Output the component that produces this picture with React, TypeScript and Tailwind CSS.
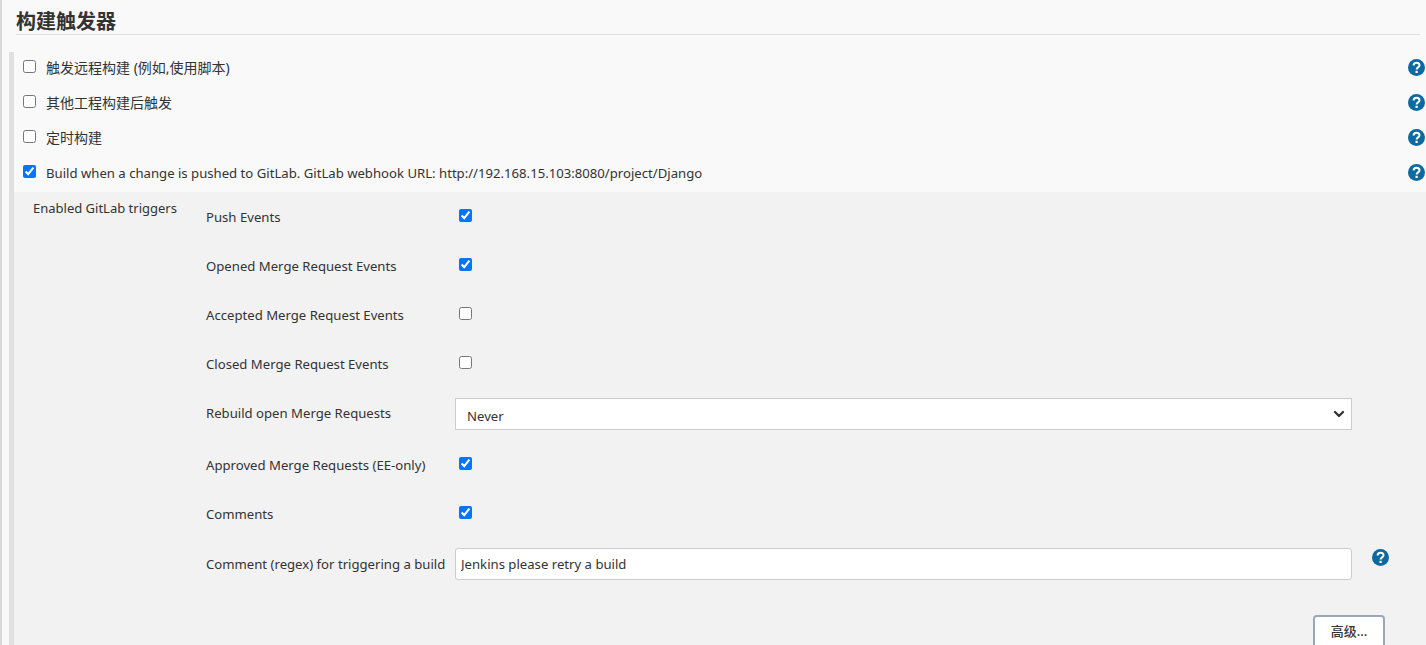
import { ChevronDown } from "lucide-react";

const font = { fontFamily: '"Noto Sans", "Noto Sans CJK SC", sans-serif' };

function HelpIcon() {
  return (
    <svg viewBox="0 0 17 17" className="h-[17px] w-[17px] shrink-0">
      <circle cx="8.5" cy="8.5" r="8.5" fill="#0b6aa2" />
      <path
        d="M5.6 6.6c0-1.8 1.3-2.9 3-2.9s2.9 1.1 2.9 2.5c0 2.1-2.9 2.3-2.9 4.3"
        fill="none"
        stroke="#fff"
        strokeWidth="2"
      />
      <rect x="7.5" y="11.8" width="2.2" height="2.2" fill="#fff" />
    </svg>
  );
}

const topRows = [
  { label: "触发远程构建 (例如,使用脚本)", checked: false, size: "pt-[2px] text-[14px]" },
  { label: "其他工程构建后触发", checked: false, size: "pt-[2px] text-[14px]" },
  { label: "定时构建", checked: false, size: "pt-[2px] text-[14px]" },
  {
    label: "Build when a change is pushed to GitLab. GitLab webhook URL: http://192.168.15.103:8080/project/Django",
    checked: true,
    size: "pt-[4px] text-[13.15px]",
  },
];

function CheckRow({ label, checked, size }: { label: string; checked: boolean; size: string }) {
  return (
    <div className="flex h-[35px] items-center pb-[6px] pl-[9px] pr-[1px]">
      <input type="checkbox" defaultChecked={checked} className="m-0 h-[13px] w-[13px] shrink-0" />
      <span className={`ml-[10px] flex-1 text-[#333] ${size}`}>{label}</span>
      <div className="pt-[1px]">
        <HelpIcon />
      </div>
    </div>
  );
}

function TriggerCheck({ label, checked }: { label: string; checked: boolean }) {
  return (
    <div className="flex h-[49px] items-center">
      <span className="w-[249px] text-[13.15px] text-[#333]">{label}</span>
      <input type="checkbox" defaultChecked={checked} className="m-0 mb-[4px] ml-[4px] h-[13px] w-[13px]" />
    </div>
  );
}

export default function App() {
  return (
    <div style={font} className="h-[645px] w-[1426px] overflow-hidden border-l-2 border-[#d8d8d8] bg-[#f9f9f9] pl-[7px]">
      <div className="ml-[7px] mr-[6px] flex h-[35px] items-center border-b border-[#e0e0e0] pt-[10px]">
        <h2 className="text-[20px] font-bold leading-[30px] text-[#333]">构建触发器</h2>
      </div>

      <div className="mt-[17px] border-l-[5px] border-[#e0e0e0]">
        <div className="flex flex-col">
          {topRows.map((row) => (
            <CheckRow key={row.label} label={row.label} checked={row.checked} size={row.size} />
          ))}
        </div>

        <div className="flex bg-[#f2f2f2] pl-[19px] pt-[1px]">
          <div className="w-[173px] pt-[6px] text-[13px] text-[#333]">Enabled GitLab triggers</div>
          <div className="flex-1">
            <TriggerCheck label="Push Events" checked />
            <TriggerCheck label="Opened Merge Request Events" checked />
            <TriggerCheck label="Accepted Merge Request Events" checked={false} />
            <TriggerCheck label="Closed Merge Request Events" checked={false} />

            <div className="flex h-[52px] items-start pt-[9px]">
              <span className="mt-[1px] w-[249px] text-[13.15px] leading-[28px] text-[#333]">Rebuild open Merge Requests</span>
              <div className="relative w-[897px]">
                <select
                  defaultValue="Never"
                  className="block h-[32px] w-full appearance-none rounded-none border border-[#ccc] bg-white pl-[11px] pt-[5px] text-[13.15px] text-[#333]"
                >
                  <option>Never</option>
                </select>
                <ChevronDown
                  className="pointer-events-none absolute right-[5px] top-[8px] h-[16px] w-[16px] text-[#333]"
                  strokeWidth={3.5}
                />
              </div>
            </div>

            <TriggerCheck label="Approved Merge Requests (EE-only)" checked />
            <TriggerCheck label="Comments" checked />

            <div className="flex h-[49px] items-center">
              <span className="w-[249px] pt-[2px] text-[13.15px] text-[#333]">Comment (regex) for triggering a build</span>
              <input
                type="text"
                defaultValue="Jenkins please retry a build"
                className="h-[32px] w-[897px] rounded-[3px] border border-[#ccc] bg-white px-[5px] text-[13.15px] text-[#333]"
              />
              <div className="mb-[12px] ml-[20px]">
                <HelpIcon />
              </div>
            </div>

            <div className="mt-[27px] flex justify-end pr-[41px]">
              <button className="h-[34px] w-[72px] rounded-[4px] border-2 border-[#9aa7b4] bg-white text-[13px] font-medium text-[#333]">
                高级...
              </button>
            </div>
          </div>
        </div>
      </div>
    </div>
  );
}
